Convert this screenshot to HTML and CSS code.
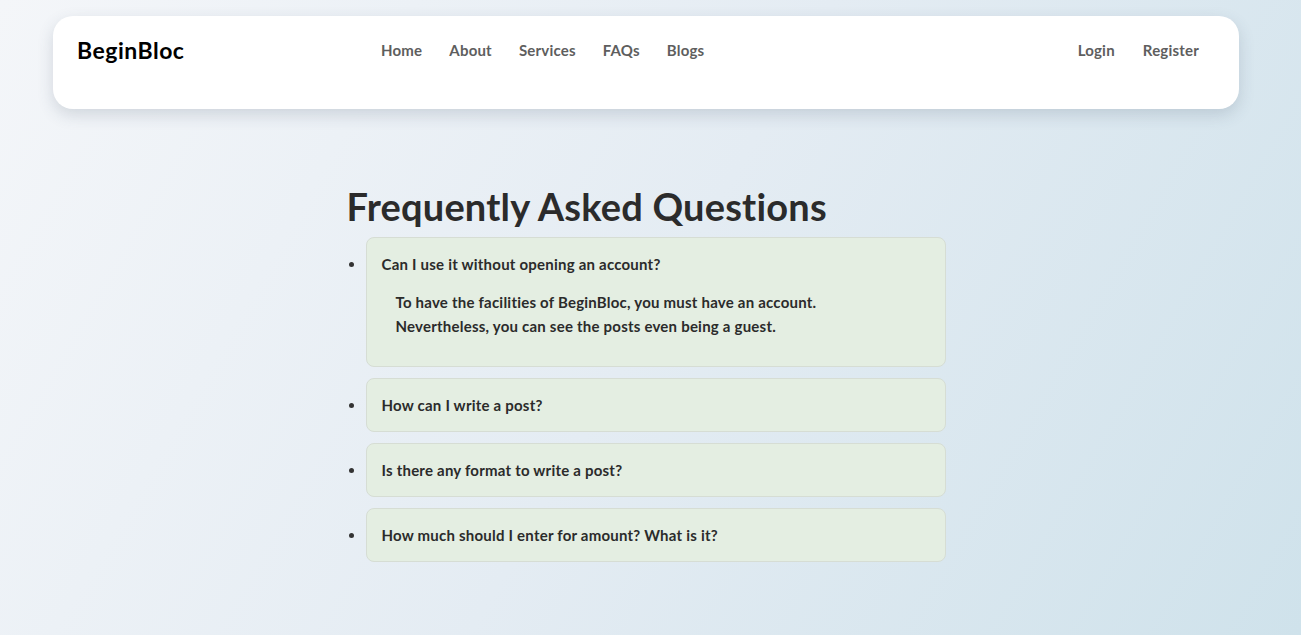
FILE: index.html
```html
<!DOCTYPE html>
<html lang="en">
<head>
<meta charset="utf-8">
<title>BeginBloc - FAQs</title>
<link rel="stylesheet" href="styles.css">
</head>
<body>
<header class="navbar">
  <div class="logo">BeginBloc</div>
  <nav class="menu">
    <a href="#">Home</a>
    <a href="#">About</a>
    <a href="#">Services</a>
    <a href="#">FAQs</a>
    <a href="#">Blogs</a>
  </nav>
  <nav class="auth">
    <a href="#">Login</a>
    <a href="#">Register</a>
  </nav>
</header>
<main class="faq">
  <h1 class="faq-title">Frequently Asked Questions</h1>
  <ul class="faq-list">
    <li class="faq-item">
      <div class="question">Can I use it without opening an account?</div>
      <p class="answer">To have the facilities of BeginBloc, you must have an account.<br>Nevertheless, you can see the posts even being a guest.</p>
    </li>
    <li class="faq-item"><div class="question">How can I write a post?</div></li>
    <li class="faq-item"><div class="question">Is there any format to write a post?</div></li>
    <li class="faq-item"><div class="question">How much should I enter for amount? What is it?</div></li>
  </ul>
</main>
</body>
</html>
```
FILE: styles.css
```css
html, body {
  margin: 0;
  padding: 0;
}
body {
  min-height: 635px;
  background: linear-gradient(120deg, #f4f6f9 0%, #e4ecf3 50%, #cfe2eb 100%);
  font-family: Lato, "Open Sans", sans-serif;
  color: #2b2b2b;
  padding-top: 16px;
  box-sizing: border-box;
}
.navbar {
  margin: 0 62px 0 53px;
  height: 93px;
  box-sizing: border-box;
  background: #fff;
  border-radius: 20px;
  box-shadow: 0 6px 16px rgba(60, 80, 100, 0.18);
  display: flex;
  align-items: flex-start;
  padding: 21px 40px 0 24px;
}
.logo {
  font-size: 23px;
  font-weight: 700;
  letter-spacing: 0.5px;
  color: #000;
  line-height: 26px;
  width: 304px;
}
.menu, .auth {
  display: flex;
  gap: 27px;
  padding-top: 4px;
}
.menu a, .auth a {
  font-size: 15px;
  font-weight: 700;
  letter-spacing: 0.2px;
  color: #5e5e5e;
  text-decoration: none;
  line-height: 18px;
}
.auth {
  margin-left: auto;
  gap: 28px;
}
.faq {
  width: 599px;
  margin: 0 0 0 calc(50% - 304px);
  padding-top: 75px;
}
.faq-title {
  margin: 0;
  font-size: 38px;
  font-weight: 700;
  letter-spacing: 0.2px;
  line-height: 44px;
  color: #2b2b2b;
}
.faq-list {
  margin: 9px 0 0;
  padding-left: 19px;
  display: flex;
  flex-direction: column;
  gap: 11px;
}
.faq-item {
  background: #e4eee2;
  border: 1px solid #d6ddd4;
  border-radius: 8px;
  padding: 16px 15px 16px 15px;
  font-size: 15px;
  font-weight: 700;
  letter-spacing: 0.22px;
  color: #2b2b2b;
}
.faq-item::marker {
  color: #333;
}
.question {
  line-height: 20px;
}
.answer {
  margin: 16px 0 12px;
  padding-left: 14px;
  line-height: 24px;
}
```
